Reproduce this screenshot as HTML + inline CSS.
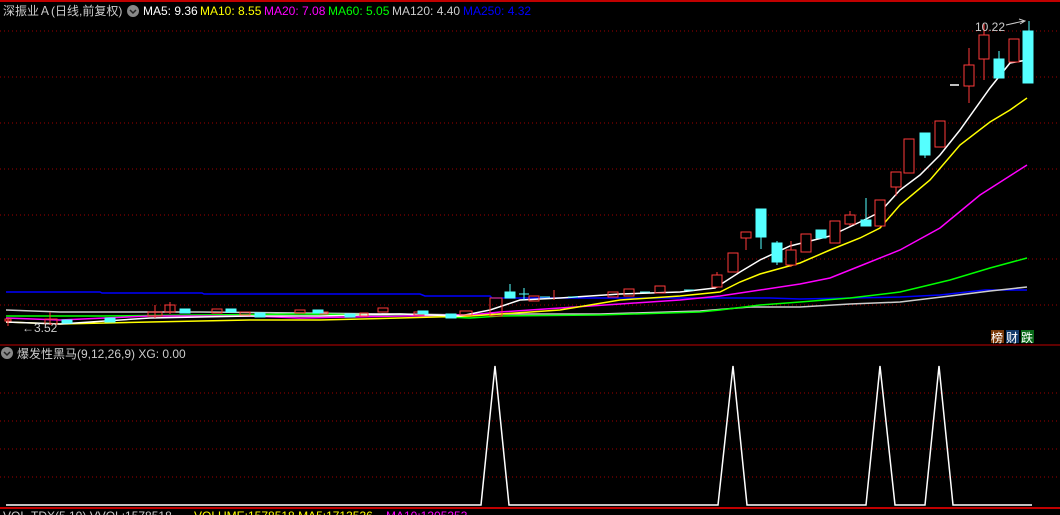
<!DOCTYPE html>
<html><head><meta charset="utf-8"><style>
html,body{margin:0;padding:0;background:#000;width:1060px;height:515px;overflow:hidden}
svg{display:block}
text{font-family:"Liberation Sans","Noto Sans CJK SC",sans-serif;font-size:12px}
</style></head><body>
<svg width="1060" height="515" xmlns="http://www.w3.org/2000/svg">
<rect width="1060" height="515" fill="#000"/>
<line x1="0" y1="1" x2="1060" y2="1" stroke="#c00000" stroke-width="2"/>
<g stroke="#a00000" stroke-dasharray="1,3">
<line x1="0" y1="31" x2="1060" y2="31"/><line x1="0" y1="77" x2="1060" y2="77"/>
<line x1="0" y1="123" x2="1060" y2="123"/><line x1="0" y1="169" x2="1060" y2="169"/>
<line x1="0" y1="215" x2="1060" y2="215"/><line x1="0" y1="259" x2="1060" y2="259"/>
<line x1="0" y1="305" x2="1060" y2="305"/>
<line x1="0" y1="393" x2="1060" y2="393"/><line x1="0" y1="421" x2="1060" y2="421"/>
<line x1="0" y1="449" x2="1060" y2="449"/><line x1="0" y1="477" x2="1060" y2="477"/>
</g>
<line x1="0" y1="345" x2="1060" y2="345" stroke="#c00000"/>
<line x1="0" y1="508" x2="1060" y2="508" stroke="#c00000" stroke-width="2"/>

<text x="3" y="15" fill="#ccc">深振业Ａ(日线,前复权)</text>
<circle cx="133" cy="11" r="6" fill="#888"/><path d="M130 10l3 3 3-3" stroke="#222" fill="none" stroke-width="1.5"/>
<text x="143" y="15" fill="#fff">MA5: 9.36</text>
<text x="200" y="15" fill="#ff0">MA10: 8.55</text>
<text x="264" y="15" fill="#f0f">MA20: 7.08</text>
<text x="328" y="15" fill="#0f0">MA60: 5.05</text>
<text x="392" y="15" fill="#ccc">MA120: 4.40</text>
<text x="463" y="15" fill="#00f">MA250: 4.32</text>

<polyline fill="none" stroke="#00f" stroke-width="1.5" points="6,292 100,292 102,293 202,293 204,294 420,294 425,296 490,296 492,298 700,298 705,298 770,298 800,299 850,298 900,297 940,295 985,290 1027,290"/>
<polyline fill="none" stroke="#ccc" stroke-width="1.5" points="6,310 60,312 120,312 200,312 300,313 400,314 470,315 500,314 600,314 700,311 750,307 800,307 850,304 900,302 950,296 990,291 1027,287"/>
<polyline fill="none" stroke="#0f0" stroke-width="1.5" points="6,316 100,316 200,315 300,314 400,315 470,318 500,316 600,315 700,312 720,310 760,305 800,302 850,298 900,292 950,280 990,268 1027,258"/>
<polyline fill="none" stroke="#f0f" stroke-width="1.5" points="6,318 60,320 150,316 250,316 300,318 400,316 470,315 500,312 560,308 620,304 680,300 720,296 760,290 800,284 830,278 860,266 900,250 940,228 980,195 1027,165"/>
<polyline fill="none" stroke="#ff0" stroke-width="1.5" points="6,322 60,324 150,322 250,320 320,320 400,318 470,316 500,314 560,310 620,300 680,296 720,292 740,282 760,274 800,263 830,250 860,238 880,228 900,205 930,180 960,145 990,122 1010,110 1027,98"/>
<polyline fill="none" stroke="#fff" stroke-width="1.5" points="6,322 60,324 150,318 250,316 320,316 400,314 460,316 490,310 520,300 560,298 620,294 680,292 715,288 740,272 760,260 790,246 830,236 860,222 880,212 900,190 920,175 940,155 960,130 990,88 1010,63 1027,60"/>

<g stroke="#ff3a3a" fill="none">
<line x1="8" y1="318" x2="8" y2="326"/><rect x="5" y="319" width="6" height="2"/>
<rect x="45" y="319" width="12" height="5"/>
<line x1="50" y1="312" x2="50" y2="325"/>
<rect x="148" y="312" width="14" height="4"/><line x1="155" y1="305" x2="155" y2="318"/>
<rect x="165" y="305" width="10" height="7"/><line x1="170" y1="302" x2="170" y2="314"/>
<rect x="212" y="309" width="10" height="4"/><rect x="240" y="312" width="10" height="3"/>
<rect x="295" y="310" width="10" height="3"/><rect x="320" y="312" width="8" height="2"/>
<rect x="360" y="313" width="8" height="3"/><rect x="378" y="308" width="10" height="4"/>
<rect x="414" y="312" width="10" height="3"/><rect x="460" y="311" width="12" height="4"/>
<rect x="490" y="298" width="12" height="18"/>
<rect x="529" y="296" width="10" height="5"/><line x1="554" y1="290" x2="554" y2="300"/>
<rect x="608" y="292" width="10" height="5"/>
<rect x="624" y="289" width="10" height="7"/><rect x="655" y="286" width="10" height="7"/>
</g>
<g fill="#5ff" stroke="#5ff">
<rect x="62" y="320" width="10" height="3"/><rect x="105" y="318" width="10" height="4"/>
<rect x="180" y="309" width="10" height="4"/><rect x="226" y="309" width="10" height="3"/>
<rect x="255" y="313" width="10" height="4"/><rect x="313" y="310" width="10" height="3"/>
<rect x="345" y="314" width="10" height="3"/><rect x="418" y="311" width="10" height="3"/>
<rect x="446" y="314" width="10" height="4"/><rect x="505" y="292" width="10" height="6"/>
<line x1="510" y1="284" x2="510" y2="296"/>
<line x1="519" y1="294" x2="529" y2="294"/><line x1="524" y1="288" x2="524" y2="300"/>
<line x1="540" y1="297" x2="550" y2="297"/><line x1="568" y1="297" x2="578" y2="297"/>
<line x1="640" y1="292" x2="650" y2="292"/><line x1="684" y1="290" x2="694" y2="290"/>
</g>
<text x="22" y="332" fill="#ccc">←3.52</text>

<g stroke="#ff3a3a" fill="none" stroke-width="1">
<line x1="717" y1="272" x2="717" y2="288"/><rect x="712" y="275" width="10" height="12" fill="#000"/>
<rect x="728" y="253" width="10" height="19" fill="#000"/>
<line x1="746" y1="238" x2="746" y2="250"/><rect x="741" y="232" width="10" height="6" fill="#000"/>
<line x1="791" y1="241" x2="791" y2="267"/><rect x="786" y="250" width="10" height="15" fill="#000"/>
<rect x="801" y="234" width="10" height="18" fill="#000"/>
<rect x="830" y="221" width="10" height="22" fill="#000"/>
<line x1="850" y1="211" x2="850" y2="226"/><rect x="845" y="215" width="10" height="9" fill="#000"/>
<rect x="875" y="200" width="10" height="26" fill="#000"/>
<line x1="896" y1="187" x2="896" y2="196"/><rect x="891" y="172" width="10" height="15" fill="#000"/>
<rect x="904" y="139" width="10" height="34" fill="#000"/>
<rect x="935" y="121" width="10" height="26" fill="#000"/>
<line x1="969" y1="48" x2="969" y2="103"/><rect x="964" y="65" width="10" height="21" fill="#000"/>
<line x1="984" y1="24" x2="984" y2="80"/><rect x="979" y="35" width="10" height="24" fill="#000"/>
<rect x="1009" y="39" width="10" height="23" fill="#000"/>
</g>
<g fill="#5ff" stroke="#5ff">
<line x1="761" y1="209" x2="761" y2="249"/><rect x="756" y="209" width="10" height="28"/>
<line x1="777" y1="241" x2="777" y2="265"/><rect x="772" y="243" width="10" height="19"/>
<rect x="816" y="230" width="10" height="8"/>
<line x1="866" y1="198" x2="866" y2="226"/><rect x="861" y="220" width="10" height="6"/>
<line x1="925" y1="148" x2="925" y2="158"/><rect x="920" y="133" width="10" height="22"/>
<line x1="999" y1="51" x2="999" y2="78"/><rect x="994" y="59" width="10" height="19"/>
<line x1="1029" y1="21" x2="1029" y2="83"/><rect x="1023" y="31" width="10" height="52"/>
</g>
<line x1="950" y1="85" x2="959" y2="85" stroke="#fff" stroke-width="1.5"/>
<text x="975" y="31" fill="#ccc">10.22</text>
<path d="M1006 25 L1024 21 M1019 19 L1025 21 L1020 24" stroke="#ccc" fill="none"/>

<rect x="991" y="330" width="13" height="13" fill="#7a3a0a"/><text x="991" y="342" fill="#fff">榜</text>
<rect x="1006" y="330" width="13" height="13" fill="#123a6a"/><text x="1006" y="342" fill="#fff">财</text>
<rect x="1021" y="330" width="13" height="13" fill="#0a6a1a"/><text x="1021" y="342" fill="#fff">跌</text>

<circle cx="7" cy="353" r="6" fill="#888"/><path d="M4 352l3 3 3-3" stroke="#222" fill="none" stroke-width="1.5"/>
<text x="17" y="358" fill="#ccc">爆发性黑马(9,12,26,9) XG: 0.00</text>
<polyline fill="none" stroke="#fff" stroke-width="1.5" points="6,505 481,505 495,366 509,505 718,505 733,366 747,505 866,505 880,366 895,505 925,505 939,366 953,505 1032,505"/>
<text x="3" y="520" fill="#ccc">VOL-TDX(5,10) VVOL:1578518</text>
<text x="194" y="520" fill="#ff0">VOLUME:1578518 MA5:1713536</text>
<text x="386" y="520" fill="#f0f">MA10:1305353</text>
</svg>
</body></html>
